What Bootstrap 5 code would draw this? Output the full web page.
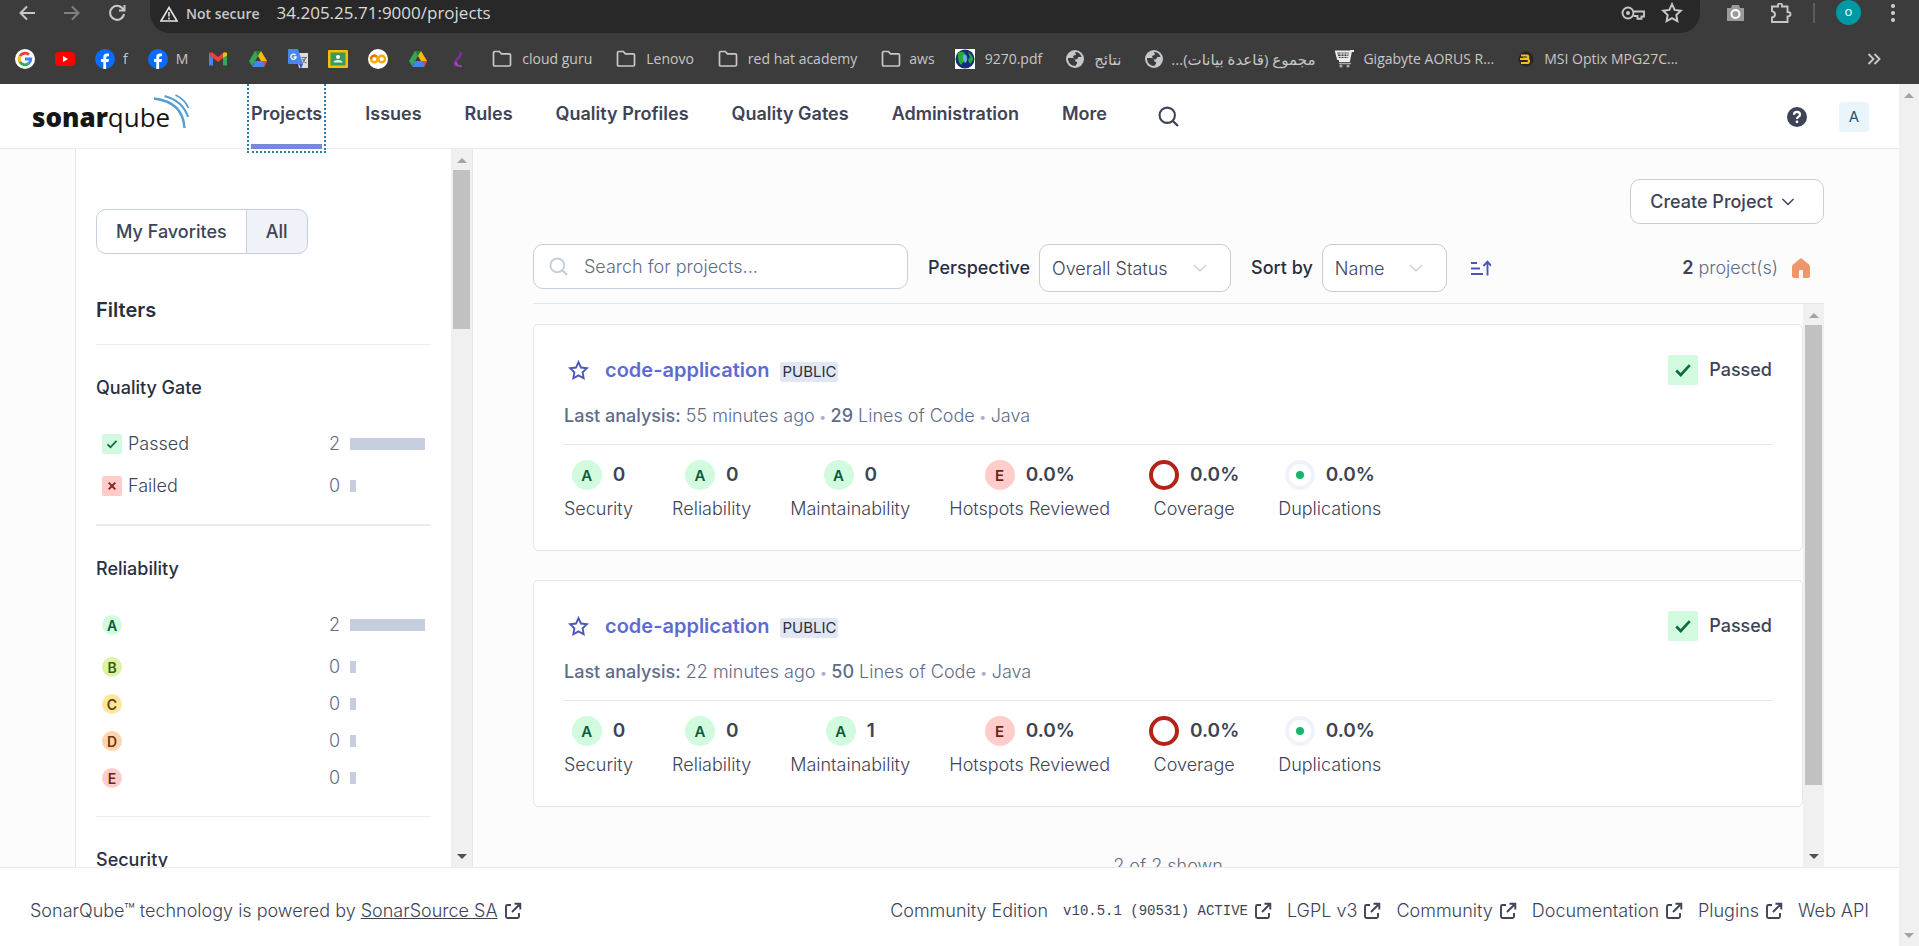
<!DOCTYPE html>
<html lang="en">
<head>
<meta charset="utf-8">
<meta name="viewport" content="width=device-width, initial-scale=1">
<title>Projects</title>
<link href="https://cdn.jsdelivr.net/npm/bootstrap@5.3.0/dist/css/bootstrap.min.css" rel="stylesheet">
<style>
:root { --ink:#3e4357; --dark:#292f40; --muted:#616c88; --line:#e1e6f3; --edge:#c5cdde; --brand:#5d6cd0; }
body { font-family:Inter,sans-serif; font-size:18px; font-weight:300; line-height:24px; color:var(--ink); background:#fcfcfd; overflow:hidden; }
a { color:inherit; text-decoration:none; }
svg { display:block; flex:none; }
.fw-sb { font-weight:500; }

/* browser frame */
.chrome { background:#3c3c3c; color:#c7c7c7; font-family:"Open Sans","DejaVu Sans",sans-serif; font-weight:400; }
.toolbar { height:33px; padding-left:18px; gap:27px; }
.toolbar > svg, .tools > svg, .omnibox > svg { margin-top:-8px; }
.omnibox { background:#282828; height:33px; border-radius:0 0 20px 20px; margin-left:-3px; padding:0 17px 0 10px; }
.chip { background:#3c3c3c; height:27px; border-radius:12px 12px 14px 14px; padding:0 9px 6px 5px; gap:8px; font-size:14px; font-weight:600; color:#e3e3e3; }
.address { font-size:17px; color:#dadada; padding:0 0 7px 17px; }
.key { margin-right:16px; }
.tools { gap:21px; padding:0 24px 0 26px; margin-left:-27px; }
.avatar-o { width:25px; height:25px; border-radius:50%; background:#0097a7; color:#fff; font-size:13px; line-height:23px; text-align:center; margin-top:-9px; }
.bookmarks { height:51px; padding:0 38px 0 15px; font-size:14px; gap:20px; white-space:nowrap; }
.bookmarks a { display:flex; align-items:center; gap:8px; }
.bookmarks .wide { gap:10px; margin-right:4px; }
.bookmarks [dir=rtl] { font-size:15px; }

/* application header */
.appbar { height:65px; background:#fff; border-bottom:1px solid #ebebeb; padding:1px 30px 0 32px; flex:none; }
.mainnav { gap:43px; margin-left:61px; font-weight:600; }
.mainnav a { height:64px; padding-top:17px; }
.mainnav .current { border-bottom:5px solid #7b87d9; outline:2px dotted #2c7cb0; outline-offset:2px; }
.mainnav button, .plain { border:0; background:none; padding:0; color:inherit; }
.user { width:30px; height:30px; background:#e9f4fb; border:0; border-radius:4px; color:#2c5270; font-size:15px; font-weight:400; padding:0; }

/* scroll tracks */
.track { width:21px; background:#f0f0f0; flex:none; padding:9px 2px 8px; }
.track.tall { width:20px; }
.grip { background:#c1c1c1; margin-top:7px; width:17px; }
.up, .down { width:0; height:0; border:5px solid transparent; margin:0 auto; }
.up { border-bottom-color:#a3a3a3; border-top:0; }
.down { border-top-color:#505050; border-bottom:0; margin-top:auto; }
.tall .down { border-top-color:#a3a3a3; }

/* sidebar */
.side { width:398px; margin-left:75px; background:#fff; border-left:1px solid var(--line); border-right:1px solid var(--line); flex:none; }
.facets { padding:60px 20px 0; overflow:hidden; }
.toggle .btn { border:1px solid var(--edge); color:var(--ink); font-size:18px; font-weight:500; line-height:25px; padding:9px 19px; border-radius:10px; }
.toggle .on { background:#eff2f9; }
.facets h2 { font-size:20px; font-weight:600; line-height:28px; color:var(--dark); margin:42px 0 20px; }
.facets h3 { font-size:18px; font-weight:500; line-height:24px; color:var(--dark); margin:0 0 25px; }
.facet { border-top:1px solid #ebebeb; padding:31px 6px 0 0; height:180px; }
.facet.long { height:292px; border-top-width:2px; }
.facet li { height:37px; padding-left:6px; align-items:center; display:flex; gap:6px; }
.facet li:first-child { height:42px; padding-bottom:5px; }
.facet.short li { height:42px; padding-bottom:5px; }
.count { color:var(--muted); width:40px; text-align:right; margin-left:auto; margin-right:4px; }
.meter-box { width:75px; height:12px; }
.meter-bar { height:12px; background:#c5cdde; }
.rate { display:inline-block; width:20px; height:20px; border-radius:50%; font-size:14px; line-height:21px; font-weight:600; text-align:center; flex:none; }
.rate.big { width:30px; height:30px; font-size:15px; line-height:31px; }
.rA { background:#d1fadf; color:#0b5a38; } .rB { background:#def3a4; color:#3d5b19; } .rC { background:#fce69c; color:#5c4410; }
.rD { background:#fed4a9; color:#72300f; } .rE { background:#fecdca; color:#6b1f1a; }
.tick { width:20px; height:20px; border-radius:2px; background:#d1fadf; color:#0b6b42; }
.tick.big { width:30px; height:30px; margin-right:11px; }
.tick.bad { background:#fecdca; color:#8e1d17; }

/* project list */
.content-col { padding:30px 75px 0 60px; }
.create { border:1px solid var(--edge); background:#fff; border-radius:10px; font-weight:500; height:45px; padding:0 28px 0 19px; color:var(--ink); }
.filters { padding:20px 0 9px; border-bottom:1px solid var(--line); height:80px; flex:none; align-items:flex-start; color:var(--dark); }
.finder { width:375px; height:45px; border:1px solid var(--edge); background:#fff; border-radius:10px; padding-left:15px; }
.finder input { border:0; background:none; outline:0; color:var(--ink); font-weight:300; }
.finder input::placeholder { color:var(--muted); opacity:1; }
.filters .form-select { height:48px; border:1px solid #ccc; border-radius:10px; background-color:#fff; color:var(--ink); font-size:18px; font-weight:300; padding:0 12px; width:192px; background-size:16px; background-position:right 22px center;
 background-image:url("data:image/svg+xml,%3Csvg xmlns='http://www.w3.org/2000/svg' viewBox='0 0 16 16'%3E%3Cpath d='M2 5l6 6 6-6' fill='none' stroke='%23ccc' stroke-width='1.3'/%3E%3C/svg%3E"); }
.filters .narrow { width:125px; }
.filters label { font-weight:500; margin:0 9px 0 20px; white-space:nowrap; }
.tallrow { height:48px; }
.total { color:var(--muted); white-space:nowrap; }
.total b { color:var(--ink); font-weight:600; }
.homeicon { margin:0 14px; }
.cards { padding-top:20px; overflow:hidden; }
.project { background:#fff; border:1px solid var(--line); border-radius:5px; padding:30px 30px 0; height:227px; margin-bottom:29px; flex:none; }
.project h2 { font-size:20px; font-weight:600; line-height:28px; margin:0; color:var(--brand); }
.tag { background:#e1e6f3; color:var(--dark); font-size:15px; font-weight:400; line-height:20px; padding:0 2px; border-radius:2px; margin:3px 0 0 11px; }
.lastrun { color:var(--muted); margin-top:19px; padding-bottom:15px; border-bottom:1px solid var(--line); }
.lastrun i { color:#a6adc8; font-style:normal; font-size:14px; margin:0 4px; }
.metrics { gap:39px; padding-top:15px; }
.metrics .val { font-size:19px; font-weight:600; gap:11px; height:30px; }
.metrics .val + div { margin-top:7px; }
.favorite { color:#4b56bb; }
.shown { color:var(--muted); margin-top:18px; }

/* footer */
.foot { background:#fff; border-top:1px solid #ebebeb; height:79px; padding:8px 30px 0; white-space:nowrap; flex:none; }
.foot nav { gap:15px; }
.foot a.ext { display:inline-flex; align-items:center; gap:6px; }
.ver { font-family:"Liberation Mono",monospace; font-size:14px; font-weight:400; }
</style>
</head>
<body class="vh-100 d-flex flex-column">
<svg width="0" height="0" class="position-absolute" aria-hidden="true">
 <symbol id="folder" viewBox="0 0 20 18"><path d="M1.500 2.800q0-1.300 1.300-1.300h4.600l2 2.300h7.800q1.300 0 1.300 1.300v9.600q0 1.300-1.300 1.300H2.800q-1.300 0-1.300-1.300z" fill="none" stroke="#c7c7c7" stroke-width="1.700"/></symbol>
 <symbol id="drive" viewBox="0 0 20 18"><path d="M7 1h6l6 10h-6z" fill="#fbbc04"/><path d="M7 1L1 11l3 5 6-10z" fill="#34a853"/><path d="M4 17l3-6h12l-3 6z" fill="#4285f4"/><path d="M14.800 11H19l-3 6z" fill="#ea4335"/><path d="M7 1h6l-3 5z" fill="#188038"/></symbol>
 <symbol id="globe" viewBox="0 0 18 18"><circle cx="9" cy="9" r="9" fill="#c4c7cc"/><path d="M2 8h5q2 0 2 2t2 2v2q-1 0-1.500 2Q3 16 2 9.500zM9 2q5 0 6.500 5H12q0 2.500-2.500 2.500L7 7q0-2 3-2z" fill="#3c3c3c"/></symbol>
 <symbol id="fb" viewBox="0 0 20 20"><circle cx="10" cy="10" r="10" fill="#0a6cff"/><path d="M8.300 20v-7H6v-3h2.300V8.200Q8.300 4.500 12 4.500h2v2.700h-1.500q-1.400 0-1.400 1.500V10H14l-.5 3h-2.400v7z" fill="#fff"/></symbol>
 <symbol id="ext" viewBox="0 0 18 18"><path d="M7 3H3.500Q2 3 2 4.500v10Q2 16 3.500 16h10q1.500 0 1.500-1.500V11M8 10l7-7M10.500 1.800H16.300V7.600" fill="none" stroke="#3e4357" stroke-width="1.900"/></symbol>
 <symbol id="check" viewBox="0 0 20 20"><path d="M5.500 10.300l3 3 6-6.500" fill="none" stroke="currentColor" stroke-width="1.800"/></symbol>
 <symbol id="cross" viewBox="0 0 20 20"><path d="M6.700 6.700l6.600 6.600M13.300 6.700l-6.600 6.600" fill="none" stroke="currentColor" stroke-width="1.900"/></symbol>
 <symbol id="star" viewBox="0 0 20 20"><path d="M10 2l2.400 5.200 5.600.7-4.100 3.900 1 5.600L10 14.700l-4.900 2.700 1-5.600L2 7.900l5.600-.7z" fill="none" stroke="currentColor" stroke-width="1.800"/></symbol>
 <symbol id="lens" viewBox="0 0 20 20"><circle cx="8.800" cy="8.800" r="7.300" fill="none" stroke="currentColor" stroke-width="2"/><path d="M14 14l5 5" stroke="currentColor" stroke-width="2.200"/></symbol>
</svg>

<div class="chrome">
 <div class="toolbar d-flex align-items-center">
  <svg width="18" height="16" viewBox="0 0 18 16"><path d="M17 8H3M9 1.500L2.500 8 9 14.500" fill="none" stroke="#c7c7c7" stroke-width="2"/></svg>
  <svg width="18" height="16" viewBox="0 0 18 16"><path d="M1 8h14M9 1.500L15.500 8 9 14.500" fill="none" stroke="#808080" stroke-width="2"/></svg>
  <svg width="18" height="18" viewBox="0 0 18 18"><path d="M15.500 6A7 7 0 1 0 16 10M16.500 1v5.500H11" fill="none" stroke="#c7c7c7" stroke-width="2"/></svg>
  <div class="omnibox d-flex align-items-center flex-grow-1">
   <button class="plain chip d-flex align-items-center align-self-start"><svg width="18" height="16" viewBox="0 0 18 16"><path d="M9 1.500L17 15H1z" fill="none" stroke="#e3e3e3" stroke-width="1.600"/><path d="M9 6v4.500M9 11.500v2" stroke="#e3e3e3" stroke-width="1.600"/></svg>Not secure</button>
   <span class="address flex-grow-1">34.205.25.71:9000/projects</span>
   <svg class="key" width="24" height="16" viewBox="0 0 24 16"><circle cx="7" cy="8" r="5.500" fill="none" stroke="#c7c7c7" stroke-width="1.900"/><circle cx="7" cy="8" r="2" fill="#c7c7c7"/><path d="M12.500 6.500H23v5h-2.500v2.300h-4V11h-4" fill="none" stroke="#c7c7c7" stroke-width="1.900"/></svg>
   <svg width="22" height="22" viewBox="0 0 20 20" color="#c7c7c7"><use href="#star"/></svg>
  </div>
  <div class="tools d-flex align-items-center">
   <svg width="19" height="18" viewBox="0 0 19 18"><path d="M1 4h4l1-3h7l1 3h4v13H1z" fill="#9b9b9b"/><circle cx="9.500" cy="10" r="4" fill="none" stroke="#fff" stroke-width="2"/></svg>
   <svg class="ms-1" width="22" height="20" viewBox="0 0 22 20"><path d="M2 3.500h6q-.5-3 2-3t2 3h5.500V9q3 0 3 2.200t-3 2.200V19H2v-4.500q3-.5 3-3T2 8z" fill="none" stroke="#c7c7c7" stroke-width="1.900"/></svg>
   <svg width="2" height="20" viewBox="0 0 2 20"><path d="M1 0v20" stroke="#666" stroke-width="1.500"/></svg>
   <span class="avatar-o">o</span>
   <svg width="13" height="18" viewBox="0 0 13 18"><g fill="#d0d0d0"><circle cx="11" cy="2" r="2"/><circle cx="11" cy="9" r="2"/><circle cx="11" cy="16" r="2"/></g></svg>
  </div>
 </div>
 <div class="bookmarks d-flex align-items-center">
  <a href="#"><svg width="20" height="20" viewBox="0 0 20 20"><circle cx="10" cy="10" r="10" fill="#fff"/><g fill="none" stroke-width="2.800"><path d="M14 5.800A5.800 5.800 0 0 0 4.900 7.200" stroke="#ea4335"/><path d="M4.900 7.200a5.800 5.800 0 0 0 0 5.600" stroke="#fbbc04"/><path d="M4.900 12.800a5.800 5.800 0 0 0 8.800 1.600" stroke="#34a853"/><path d="M13.700 14.400Q15.800 12.600 15.800 10H10" stroke="#4285f4"/></g></svg></a>
  <a href="#"><svg width="20" height="20" viewBox="0 0 20 20"><rect y="3" width="20" height="14" rx="4" fill="#f00"/><path d="M8 7l5 3-5 3z" fill="#fff"/></svg></a>
  <a href="#"><svg width="20" height="20"><use href="#fb"/></svg>f</a>
  <a href="#"><svg width="20" height="20"><use href="#fb"/></svg>M</a>
  <a href="#"><svg width="20" height="20" viewBox="0 0 20 20"><path d="M1 4h4v12.500H1z" fill="#4285f4"/><path d="M15 4h4v12.500h-4z" fill="#34a853"/><path d="M1 4q2-1.500 4 0l5 4 5-4v5l-5 4-5-4-4-3z" fill="#ea4335"/><path d="M15 4q2-1.500 4 0v2.500L15 9z" fill="#fbbc04"/></svg></a>
  <a href="#"><svg width="20" height="18"><use href="#drive"/></svg></a>
  <a href="#"><svg width="20" height="20" viewBox="0 0 20 20"><path d="M8 4h12v15H11z" fill="#dcdcdc"/><path d="M0 1q0-1 1-1h9l5 15H1q-1 0-1-1z" fill="#4a86ee"/><path d="M11 15h4l-2 5z" fill="#3159c4"/><path d="M7.500 6a2.600 2.600 0 1 0 .6 2H5.600" fill="none" stroke="#fff" stroke-width="1.300"/><path d="M13.500 8.500h5.500M17.500 8.500q-1 4-3 5.500M14.500 10q1 3 4 4" fill="none" stroke="#68727c" stroke-width="1.200"/></svg></a>
  <a href="#"><svg width="20" height="18" viewBox="0 0 20 18"><rect width="20" height="18" rx="1" fill="#fbbc04"/><rect x="2.500" y="2.500" width="15" height="13" fill="#3a9a5b"/><circle cx="10" cy="7" r="2" fill="#fff"/><path d="M5.500 12.500q0-2.500 4.500-2.500t4.500 2.500z" fill="#dff2e2"/></svg></a>
  <a href="#"><svg width="20" height="20" viewBox="0 0 20 20"><circle cx="10" cy="10" r="10" fill="#fff"/><circle cx="6.300" cy="10" r="3.300" fill="none" stroke="#f9ab00" stroke-width="2.400"/><circle cx="13.700" cy="10" r="3.300" fill="none" stroke="#f9ab00" stroke-width="2.400"/><path d="M8.600 7.600a3.300 3.300 0 0 0-5.600 2.400" fill="none" stroke="#e8710a" stroke-width="2.400"/></svg></a>
  <a href="#"><svg width="20" height="18"><use href="#drive"/></svg></a>
  <a href="#"><svg width="20" height="18" viewBox="0 0 20 18"><path d="M11 1q4 1 3 4-2 4-5 6-2 3 0 6-5-1-3-6 3-3 5-6 1-2 0-4z" fill="#7b2f9b"/><path d="M7 12q-1 4 5 5 3 0 1-2-3 1-4-3z" fill="#a948b8"/></svg></a>
  <a href="#" class="wide ms-1"><svg width="20" height="18"><use href="#folder"/></svg>cloud guru</a>
  <a href="#" class="wide"><svg width="20" height="18"><use href="#folder"/></svg>Lenovo</a>
  <a href="#" class="wide"><svg width="20" height="18"><use href="#folder"/></svg>red hat academy</a>
  <a href="#"><svg width="20" height="18"><use href="#folder"/></svg>aws</a>
  <a href="#" class="wide"><svg width="20" height="20" viewBox="0 0 20 20"><path d="M0 0h20v20H0z" fill="#fff"/><circle cx="10" cy="10" r="9.500" fill="#152c7a"/><path d="M3 4q4-3 7 0l-2 4 1 4-3 4q-4-4-3-12zM13 3q5 3 5 8l-3 4-2-4 2-3z" fill="#1fae35"/><path d="M8 6q3-2 4 2t-2 6q-3-3-2-8z" fill="#74a7e8"/></svg>9270.pdf</a>
  <a href="#" class="wide"><svg width="18" height="18"><use href="#globe"/></svg><span dir="rtl">نتائج</span></a>
  <a href="#"><svg width="18" height="18"><use href="#globe"/></svg><span dir="rtl">مجموع (قاعدة بيانات)...</span></a>
  <a href="#" class="me-1"><svg width="20" height="18" viewBox="0 0 20 18"><path d="M1 1.500l14 0L14 9H3zM19 1h-3l-2 10H4" fill="none" stroke="#eee" stroke-width="2"/><path d="M3 4h12M3 6.500h12M6 1v9M9 1v9M12 1v9" stroke="#ddd"/><path d="M4 13.500h12" stroke="#aaa" stroke-width="1.500"/><circle cx="6" cy="16" r="1.600" fill="#aaa"/><circle cx="13" cy="16" r="1.600" fill="#aaa"/></svg>Gigabyte AORUS R...</a>
  <a href="#" class="wide"><svg width="16" height="16" viewBox="0 0 16 16"><circle cx="8" cy="8" r="7.500" fill="#262626"/><path d="M3 4.500h6.500q1.500 1.500 0 3H5M5 8h5q2 2 0 4H3M2 8h4" fill="none" stroke="#f0c020" stroke-width="2.200"/></svg>MSI Optix MPG27C...</a>
  <button class="plain ms-auto" aria-label="More bookmarks"><svg width="14" height="12" viewBox="0 0 14 12"><path d="M1.500 1l5 5-5 5M7.500 1l5 5-5 5" fill="none" stroke="#c7c7c7" stroke-width="1.900"/></svg></button>
 </div>
</div>

<div class="d-flex flex-grow-1 overflow-hidden">
 <div class="d-flex flex-column flex-grow-1 overflow-hidden">
  <header class="appbar d-flex position-relative z-1">
   <a href="#" aria-label="SonarQube" class="flex-shrink-0"><svg width="158" height="63" viewBox="0 0 158 63"><text x="0" y="42" font-family="Open Sans" font-size="26" fill="#161616"><tspan font-weight="800">sonar</tspan><tspan font-weight="400">qube</tspan></text><g fill="none" stroke="#549dd0"><path d="M122 13.500Q151 17 152.500 43" stroke-width="2.400"/><path d="M132.500 11Q151 16 156 32" stroke-width="2"/><path d="M143.500 10Q153 14.500 156.500 23" stroke-width="1.700"/></g></svg></a>
   <nav class="mainnav d-flex flex-grow-1">
    <a href="#" class="current">Projects</a><a href="#">Issues</a><a href="#">Rules</a><a href="#">Quality Profiles</a><a href="#">Quality Gates</a><a href="#">Administration</a><a href="#">More</a>
    <button aria-label="Search" class="ms-2"><svg width="21" height="21"><use href="#lens"/></svg></button>
   </nav>
   <button class="plain me-4" aria-label="Help"><svg width="20" height="20" viewBox="0 0 20 20"><circle cx="10" cy="10" r="10" fill="#3e4357"/><path d="M7 7.800Q7 4.800 10 4.800t3 2.700q0 1.500-1.700 2.400-1.300.7-1.300 2" fill="none" stroke="#fff" stroke-width="2.200"/><circle cx="10" cy="14.800" r="1.400" fill="#fff"/></svg></button>
   <button class="user ms-2 align-self-center">A</button>
  </header>

  <div class="d-flex flex-grow-1 overflow-hidden">
   <aside class="side d-flex">
    <div class="facets flex-grow-1">
     <div class="toggle btn-group"><button class="btn">My Favorites</button><button class="btn on">All</button></div>
     <h2>Filters</h2>
     <section class="facet short"><h3>Quality Gate</h3>
      <ul class="list-unstyled mb-0">
       <li><svg class="tick"><use href="#check"/></svg>Passed<span class="count">2</span><div class="meter-box"><div class="meter-bar" style="width:100%"></div></div></li>
       <li><svg class="tick bad"><use href="#cross"/></svg>Failed<span class="count">0</span><div class="meter-box"><div class="meter-bar" style="width:8%"></div></div></li>
      </ul></section>
     <section class="facet long"><h3>Reliability</h3>
      <ul class="list-unstyled mb-0">
       <li><span class="rate rA">A</span><span class="count">2</span><div class="meter-box"><div class="meter-bar" style="width:100%"></div></div></li>
       <li><span class="rate rB">B</span><span class="count">0</span><div class="meter-box"><div class="meter-bar" style="width:8%"></div></div></li>
       <li><span class="rate rC">C</span><span class="count">0</span><div class="meter-box"><div class="meter-bar" style="width:8%"></div></div></li>
       <li><span class="rate rD">D</span><span class="count">0</span><div class="meter-box"><div class="meter-bar" style="width:8%"></div></div></li>
       <li><span class="rate rE">E</span><span class="count">0</span><div class="meter-box"><div class="meter-bar" style="width:8%"></div></div></li>
      </ul></section>
     <section class="facet"><h3>Security</h3></section>
    </div>
    <div class="track d-flex flex-column" aria-hidden="true"><div class="up"></div><div class="grip" style="height:159px"></div><div class="down"></div></div>
   </aside>

   <main class="content-col d-flex flex-column flex-grow-1 overflow-hidden">
    <div class="d-flex justify-content-end"><button class="create d-flex align-items-center gap-2">Create Project<svg width="14" height="10" viewBox="0 0 14 10"><path d="M1.500 2L7 7.500 12.500 2" fill="none" stroke="#3e4357" stroke-width="1.500"/></svg></button></div>
    <div class="filters d-flex">
     <div class="finder d-flex align-items-center"><svg width="19" height="19" viewBox="0 0 20 20" color="#c5cdde"><use href="#lens"/></svg><input class="flex-grow-1 ms-3 p-0" type="text" placeholder="Search for projects..." aria-label="Search for projects"></div>
     <div class="tallrow d-flex align-items-center flex-grow-1">
      <label for="persp">Perspective</label><select id="persp" class="form-select"><option>Overall Status</option></select>
      <label for="sort">Sort by</label><select id="sort" class="form-select narrow"><option>Name</option></select>
      <button class="plain ms-4" aria-label="Sort direction"><svg width="20" height="16" viewBox="0 0 20 16"><path d="M0 3h6M0 8.500h9M0 14h12M16.500 15.500V2M12.500 6l4-4.300 3.700 4.300" fill="none" stroke="#4b56bb" stroke-width="1.900"/></svg></button>
      <span class="total ms-auto"><b>2</b> project(s)</span>
      <svg class="homeicon" width="18" height="20" viewBox="0 0 18 20"><path d="M9 0L1 6.500Q0 7.500 0 9v9q0 2 2 2h5v-7q0-1 1-1h2q1 0 1 1v7h5q2 0 2-2V9q0-1.500-1-2.500z" fill="#ef976b"/></svg>
     </div>
    </div>
    <div class="d-flex flex-grow-1 overflow-hidden">
     <div class="cards d-flex flex-column flex-grow-1">
      <article class="project">
       <div class="d-flex align-items-center"><button class="plain favorite ms-1 me-3" aria-label="Favorite"><svg width="21" height="21" viewBox="0 0 20 20"><use href="#star"/></svg></button><h2><a href="#">code-application</a></h2><span class="tag">PUBLIC</span>
        <svg class="tick big ms-auto"><use href="#check"/></svg><span class="fw-sb">Passed</span></div>
       <div class="lastrun"><span class="fw-sb">Last analysis:</span> 55 minutes ago<i>•</i><span class="fw-sb">29</span> Lines of Code<i>•</i>Java</div>
       <div class="metrics d-flex text-center">
        <div><div class="val d-flex align-items-center justify-content-center"><span class="rate big rA">A</span>0</div><div>Security</div></div>
        <div><div class="val d-flex align-items-center justify-content-center"><span class="rate big rA">A</span>0</div><div>Reliability</div></div>
        <div><div class="val d-flex align-items-center justify-content-center"><span class="rate big rA">A</span>0</div><div>Maintainability</div></div>
        <div><div class="val d-flex align-items-center justify-content-center"><span class="rate big rE">E</span>0.0%</div><div>Hotspots Reviewed</div></div>
        <div><div class="val d-flex align-items-center justify-content-center"><svg width="30" height="30"><circle cx="15" cy="15" r="13" fill="none" stroke="#b42318" stroke-width="4"/></svg>0.0%</div><div>Coverage</div></div>
        <div><div class="val d-flex align-items-center justify-content-center"><svg width="30" height="30"><circle cx="15" cy="15" r="13" fill="none" stroke="#eff2f9" stroke-width="4"/><circle cx="15" cy="15" r="4" fill="#15b76c"/></svg>0.0%</div><div>Duplications</div></div>
       </div>
      </article>
      <article class="project">
       <div class="d-flex align-items-center"><button class="plain favorite ms-1 me-3" aria-label="Favorite"><svg width="21" height="21" viewBox="0 0 20 20"><use href="#star"/></svg></button><h2><a href="#">code-application</a></h2><span class="tag">PUBLIC</span>
        <svg class="tick big ms-auto"><use href="#check"/></svg><span class="fw-sb">Passed</span></div>
       <div class="lastrun"><span class="fw-sb">Last analysis:</span> 22 minutes ago<i>•</i><span class="fw-sb">50</span> Lines of Code<i>•</i>Java</div>
       <div class="metrics d-flex text-center">
        <div><div class="val d-flex align-items-center justify-content-center"><span class="rate big rA">A</span>0</div><div>Security</div></div>
        <div><div class="val d-flex align-items-center justify-content-center"><span class="rate big rA">A</span>0</div><div>Reliability</div></div>
        <div><div class="val d-flex align-items-center justify-content-center"><span class="rate big rA">A</span>1</div><div>Maintainability</div></div>
        <div><div class="val d-flex align-items-center justify-content-center"><span class="rate big rE">E</span>0.0%</div><div>Hotspots Reviewed</div></div>
        <div><div class="val d-flex align-items-center justify-content-center"><svg width="30" height="30"><circle cx="15" cy="15" r="13" fill="none" stroke="#b42318" stroke-width="4"/></svg>0.0%</div><div>Coverage</div></div>
        <div><div class="val d-flex align-items-center justify-content-center"><svg width="30" height="30"><circle cx="15" cy="15" r="13" fill="none" stroke="#eff2f9" stroke-width="4"/><circle cx="15" cy="15" r="4" fill="#15b76c"/></svg>0.0%</div><div>Duplications</div></div>
       </div>
      </article>
      <div class="shown text-center">2 of 2 shown</div>
     </div>
     <div class="track d-flex flex-column" aria-hidden="true"><div class="up"></div><div class="grip" style="height:460px"></div><div class="down"></div></div>
    </div>
   </main>
  </div>

  <footer class="foot d-flex align-items-center justify-content-between">
   <div class="d-flex align-items-center">SonarQube™ technology is powered by&nbsp;<a href="#" class="ext"><span class="text-decoration-underline">SonarSource SA</span><svg width="18" height="18"><use href="#ext"/></svg></a></div>
   <nav class="d-flex align-items-center">
    <span>Community Edition</span>
    <a href="#" class="ext ver">v10.5.1 (90531) ACTIVE<svg width="18" height="18"><use href="#ext"/></svg></a>
    <a href="#" class="ext">LGPL v3<svg width="18" height="18"><use href="#ext"/></svg></a>
    <a href="#" class="ext">Community<svg width="18" height="18"><use href="#ext"/></svg></a>
    <a href="#" class="ext">Documentation<svg width="18" height="18"><use href="#ext"/></svg></a>
    <a href="#" class="ext">Plugins<svg width="18" height="18"><use href="#ext"/></svg></a>
    <a href="#">Web API</a>
   </nav>
  </footer>
 </div>
 <div class="track tall d-flex flex-column" aria-hidden="true"><div class="up"></div><div class="down"></div></div>
</div>
<script src="https://cdn.jsdelivr.net/npm/bootstrap@5.3.0/dist/js/bootstrap.bundle.min.js"></script>
</body>
</html>
